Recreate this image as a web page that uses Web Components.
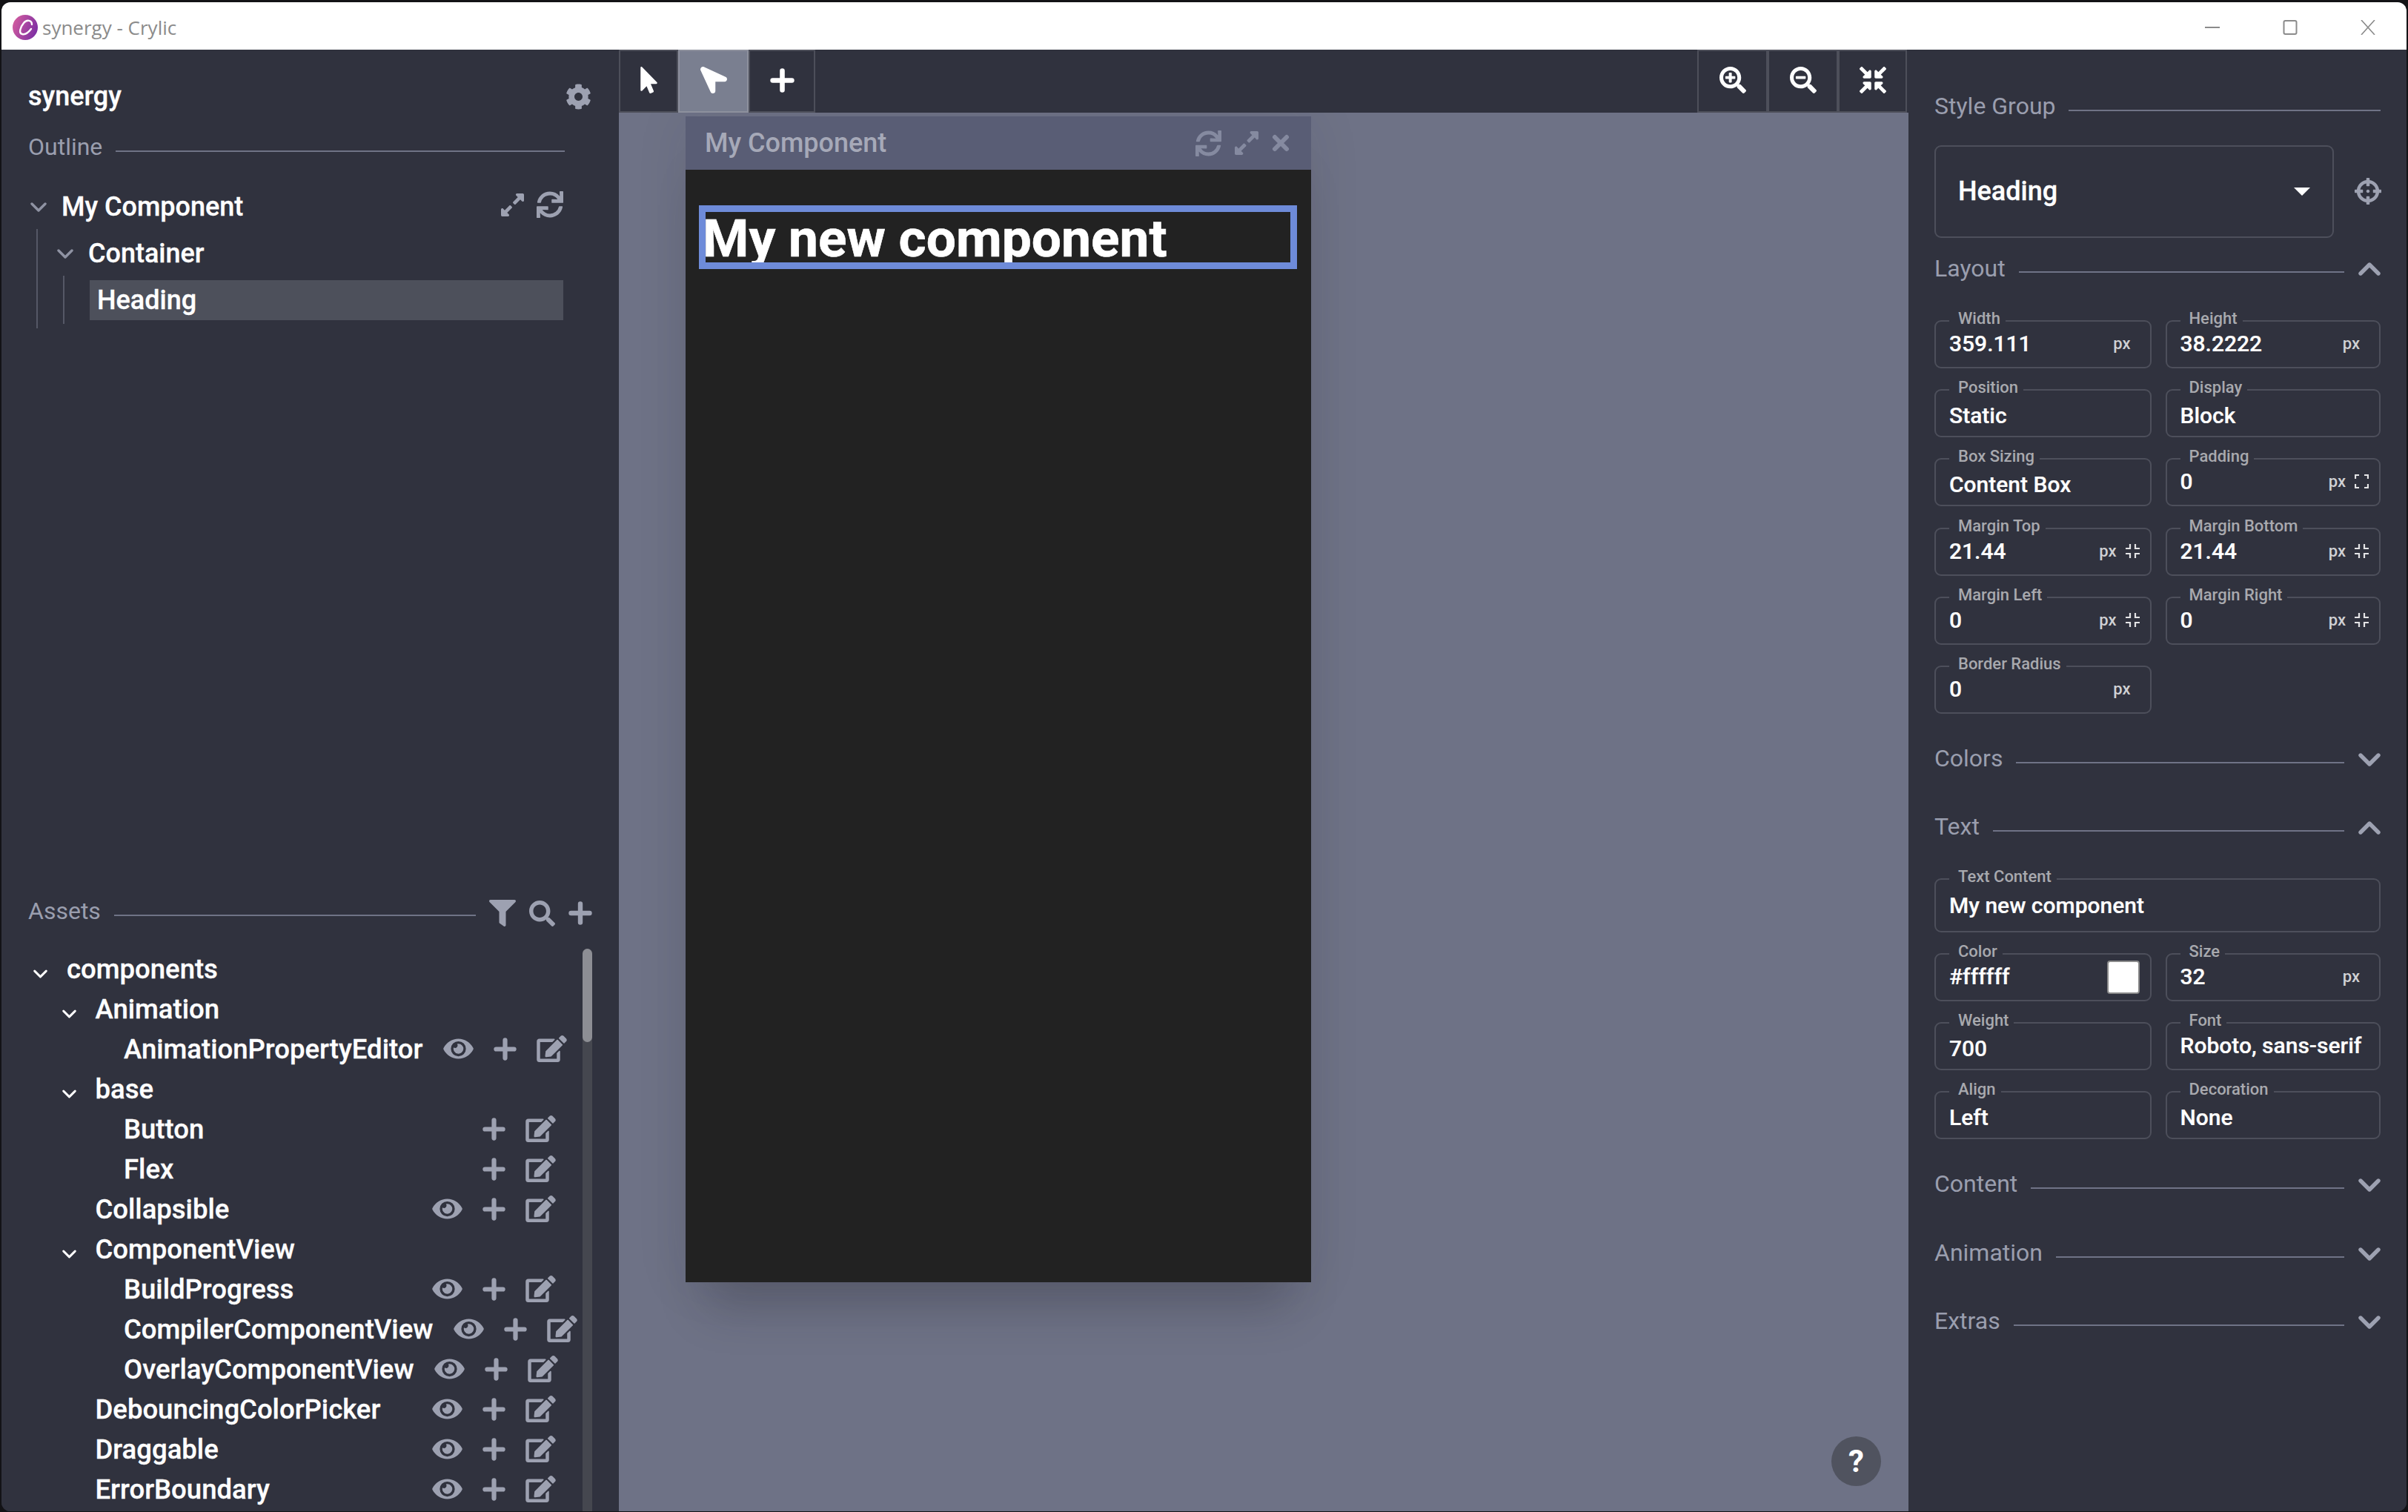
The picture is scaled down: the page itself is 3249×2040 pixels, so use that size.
<!DOCTYPE html>
<html>
<head>
<meta charset="utf-8">
<title>synergy - Crylic</title>
<style>
    html, body { margin: 0; height: 100%; background: #131316; overflow: hidden; }
    body { font-family: Roboto, "Liberation Sans", sans-serif; color: #fff; }
</style>
</head>
<body>
<app-shell>
    <title-bar slot="title"></title-bar>

    <side-panel slot="left">
        <project-head slot="head" name="synergy"></project-head>
        <section-head slot="head" label="Outline" style="margin-top:22px;padding-right:73px"></section-head>
        <outline-node slot="tree" label="My Component" root>
            <outline-node label="Container">
                <outline-node label="Heading" selected></outline-node>
            </outline-node>
        </outline-node>
        <asset-browser slot="assets"></asset-browser>
    </side-panel>

    <design-canvas slot="center"></design-canvas>

    <props-panel slot="right">
        <section-head label="Style Group" style="margin-top:57px"></section-head>
        <style-select value="Heading"></style-select>

        <section-head label="Layout" chevron="up" style="margin-top:22px"></section-head>
        <field-grid style="margin-top:51.5px">
            <prop-field label="Width" value="359.111" unit="px"></prop-field>
            <prop-field label="Height" value="38.2222" unit="px"></prop-field>
            <prop-field label="Position" value="Static" select></prop-field>
            <prop-field label="Display" value="Block" select></prop-field>
            <prop-field label="Box Sizing" value="Content Box" select></prop-field>
            <prop-field label="Padding" value="0" unit="px" corner="expand"></prop-field>
            <prop-field label="Margin Top" value="21.44" unit="px" corner="shrink"></prop-field>
            <prop-field label="Margin Bottom" value="21.44" unit="px" corner="shrink"></prop-field>
            <prop-field label="Margin Left" value="0" unit="px" corner="shrink"></prop-field>
            <prop-field label="Margin Right" value="0" unit="px" corner="shrink"></prop-field>
            <prop-field label="Border Radius" value="0" unit="px"></prop-field>
        </field-grid>

        <section-head label="Colors" chevron="down" style="margin-top:41px"></section-head>

        <section-head label="Text" chevron="up" style="margin-top:54px"></section-head>
        <field-grid style="margin-top:50.6px;--first-row:73px">
            <prop-field label="Text Content" value="My new component" wide style="grid-column:1 / -1"></prop-field>
            <prop-field label="Color" value="#ffffff" swatch></prop-field>
            <prop-field label="Size" value="32" unit="px"></prop-field>
            <prop-field label="Weight" value="700" select></prop-field>
            <prop-field label="Font" value="Roboto, sans-serif"></prop-field>
            <prop-field label="Align" value="Left" select></prop-field>
            <prop-field label="Decoration" value="None" select></prop-field>
        </field-grid>

        <section-head label="Content" chevron="down" style="margin-top:41px"></section-head>
        <section-head label="Animation" chevron="down" style="margin-top:55px"></section-head>
        <section-head label="Extras" chevron="down" style="margin-top:54px"></section-head>
    </props-panel>
</app-shell>

<script>
const searchTail = 'm201 284.7L476.7 505c-9.4 9.4-24.6 9.4-33.9 0L343 405.3c-4.5-4.5-7-10.6-7-17V372c-35.3 27.6-79.7 44-128 44C93.1 416 0 322.9 0 208S93.1 0 208 0s208 93.1 208 208c0 48.3-16.4 92.7-44 128h16.3c6.4 0 12.5 2.5 17 7l99.7 99.7c9.3 9.4 9.3 24.6 0 34zM344 208c0-75.2-60.8-136-136-136S72 132.8 72 208s60.8 136 136 136 136-60.8 136-136z';

const ICONS = {
    cog: ['0 0 512 512', '<path d="M487.4 315.7l-42.6-24.6c4.3-23.2 4.3-47 0-70.2l42.6-24.6c4.9-2.8 7.1-8.6 5.5-14-11.1-35.6-30-67.8-54.7-94.6-3.8-4.1-10-5.1-14.8-2.3L380.8 110c-17.9-15.4-38.5-27.3-60.8-35.1V25.8c0-5.6-3.9-10.5-9.4-11.7-36.7-8.2-74.3-7.8-109.2 0-5.5 1.2-9.4 6.1-9.4 11.7V75c-22.2 7.9-42.8 19.8-60.8 35.1L88.7 85.5c-4.9-2.8-11-1.9-14.8 2.3-24.7 26.7-43.6 58.9-54.7 94.6-1.7 5.4.6 11.2 5.5 14L67.3 221c-4.3 23.2-4.3 47 0 70.2l-42.6 24.6c-4.9 2.8-7.1 8.6-5.5 14 11.1 35.6 30 67.8 54.7 94.6 3.8 4.1 10 5.1 14.8 2.3l42.6-24.6c17.9 15.4 38.5 27.3 60.8 35.1v49.2c0 5.6 3.9 10.5 9.4 11.7 36.7 8.2 74.3 7.8 109.2 0 5.5-1.2 9.4-6.1 9.4-11.7v-49.2c22.2-7.9 42.8-19.8 60.8-35.1l42.6 24.6c4.9 2.8 11 1.9 14.8-2.3 24.7-26.7 43.6-58.9 54.7-94.6 1.5-5.5-.7-11.3-5.6-14.1zM256 336c-44.1 0-80-35.9-80-80s35.9-80 80-80 80 35.9 80 80-35.9 80-80 80z"/>'],
    sync: ['0 0 512 512', '<path d="M440.65 12.57l4 82.77A247.16 247.16 0 0 0 255.83 8C134.73 8 33.91 94.92 12.29 209.82A12 12 0 0 0 24.09 224h49.05a12 12 0 0 0 11.67-9.26 175.91 175.91 0 0 1 317-56.94l-101.46-4.86a12 12 0 0 0-12.57 12v47.41a12 12 0 0 0 12 12H500a12 12 0 0 0 12-12V12a12 12 0 0 0-12-12h-47.37a12 12 0 0 0-11.98 12.57zM255.83 432a175.61 175.61 0 0 1-146-77.8l101.8 4.87a12 12 0 0 0 12.57-12v-47.4a12 12 0 0 0-12-12H12a12 12 0 0 0-12 12V500a12 12 0 0 0 12 12h47.35a12 12 0 0 0 12-12.6l-4.15-82.57A247.17 247.17 0 0 0 255.83 504c121.11 0 221.93-86.92 243.55-201.82a12 12 0 0 0-11.8-14.18h-49.05a12 12 0 0 0-11.67 9.26A175.86 175.86 0 0 1 255.83 432z"/>'],
    expand: ['0 32 448 448', '<path d="M212.686 315.314L120 408l32.922 31.029c15.12 15.12 4.412 40.971-16.97 40.971h-112C10.697 480 0 469.255 0 456V344c0-21.382 25.803-32.09 40.922-16.971L72 360l92.686-92.686c6.248-6.248 16.379-6.248 22.627 0l25.373 25.373c6.249 6.248 6.249 16.378 0 22.627zm22.628-118.628L328 104l-32.922-31.029C279.958 57.851 290.666 32 312.048 32h112C437.303 32 448 42.745 448 56v112c0 21.382-25.803 32.09-40.922 16.971L376 152l-92.686 92.686c-6.248 6.248-16.379 6.248-22.627 0l-25.373-25.373c-6.249-6.248-6.249-16.378 0-22.627z"/>'],
    plus: ['0 0 32 32', '<path d="M16 3.5v25M3.5 16h25" fill="none" stroke="currentColor" stroke-width="6.4" stroke-linecap="round"/>'],
    eye: ['0 0 576 512', '<path d="M572.52 241.4C518.29 135.59 410.93 64 288 64S57.68 135.64 3.48 241.41a32.4 32.4 0 0 0 0 29.2C57.71 376.41 165.07 448 288 448s230.32-71.64 284.52-177.41a32.4 32.4 0 0 0 0-29.19zM288 400a144 144 0 1 1 144-144 143.93 143.93 0 0 1-144 144zm0-240a95.31 95.31 0 0 0-25.31 3.79 47.85 47.85 0 0 1-66.9 66.9A95.78 95.78 0 1 0 288 160z"/>'],
    edit: ['0 0 576 512', '<path d="M402.6 83.2l90.2 90.2c3.8 3.8 3.8 10 0 13.8L274.4 405.6l-92.8 10.3c-12.4 1.4-22.9-9.1-21.5-21.5l10.3-92.8L388.8 83.2c3.8-3.8 10-3.8 13.8 0zm162-22.9l-48.8-48.8c-15.2-15.2-39.9-15.2-55.2 0l-35.4 35.4c-3.8 3.8-3.8 10 0 13.8l90.2 90.2c3.8 3.8 10 3.8 13.8 0l35.4-35.4c15.2-15.3 15.2-40 0-55.2zM384 346.2V448H64V128h229.8c3.2 0 6.2-1.3 8.5-3.5l40-40c7.6-7.6 2.2-20.5-8.5-20.5H48C21.5 64 0 85.5 0 112v352c0 26.5 21.5 48 48 48h352c26.5 0 48-21.5 48-48V306.2c0-10.7-12.9-16-20.5-8.5l-40 40c-2.2 2.3-3.5 5.3-3.5 8.5z"/>'],
    filter: ['0 0 512 512', '<path d="M487.976 0H24.028C2.71 0-8.047 25.866 7.058 40.971L192 225.941V432c0 7.831 3.821 15.17 10.237 19.662l80 55.98C298.02 518.69 320 507.493 320 487.98V225.941l184.947-184.97C520.021 25.896 509.338 0 487.976 0z"/>'],
    search: ['0 0 512 512', '<path d="M505 442.7L405.3 343c-4.5-4.5-10.6-7-17-7H372c27.6-35.3 44-79.7 44-128C416 93.1 322.9 0 208 0S0 93.1 0 208s93.1 208 208 208c48.3 0 92.7-16.4 128-44v16.3c0 6.4 2.5 12.5 7 17l99.7 99.7c9.4 9.4 24.6 9.4 33.9 0l28.3-28.3c9.4-9.4 9.4-24.6.1-34zM208 336c-70.7 0-128-57.2-128-128 0-70.7 57.2-128 128-128 70.7 0 128 57.2 128 128 0 70.7-57.2 128-128 128z"/>'],
    pointer: ['0 0 320 512', '<path d="M302.189 329.126H196.105l55.831 135.993c3.889 9.428-.555 19.999-9.444 23.999l-49.165 21.427c-9.165 4-19.443-.571-23.332-9.714l-53.053-129.136-86.664 89.138C18.729 472.71 0 463.554 0 447.977V18.299C0 1.899 19.921-6.096 30.277 5.443l284.412 292.542c11.472 11.179 3.007 31.141-12.5 31.141z"/>'],
    arrow: ['0 0 512 512', '<path transform="matrix(-1 0 0 1 512 0)" d="M444.52 3.52L28.74 195.42c-47.97 22.39-31.98 92.75 19.19 92.75h175.91v175.91c0 51.17 70.36 67.17 92.75 19.19l191.9-415.78c15.99-38.39-25.59-79.97-63.97-63.97z"/>'],
    zoomin: ['0 0 512 512', '<path d="M304 192v32c0 6.6-5.4 12-12 12h-56v56c0 6.6-5.4 12-12 12h-32c-6.6 0-12-5.4-12-12v-56h-56c-6.6 0-12-5.4-12-12v-32c0-6.6 5.4-12 12-12h56v-56c0-6.6 5.4-12 12-12h32c6.6 0 12 5.4 12 12v56h56c6.6 0 12 5.4 12 12z' + searchTail + '"/>'],
    zoomout: ['0 0 512 512', '<path d="M304 192v32c0 6.6-5.4 12-12 12H124c-6.6 0-12-5.4-12-12v-32c0-6.6 5.4-12 12-12h168c6.6 0 12 5.4 12 12z' + searchTail + '"/>'],
    compress: ['0 0 512 512', '<path d="M200 288H88c-21.4 0-32.1 25.8-17 41l32.9 31-99.2 99.3c-6.2 6.2-6.2 16.4 0 22.6l25.4 25.4c6.2 6.2 16.4 6.2 22.6 0L152 408l31.1 33c15.1 15.1 40.9 4.4 40.9-17V312c0-13.3-10.7-24-24-24zm112-64h112c21.4 0 32.1-25.9 17-41l-33-31 99.3-99.3c6.2-6.2 6.2-16.4 0-22.6L481.9 4.7c-6.2-6.2-16.4-6.2-22.6 0L360 104l-31.1-33C313.8 55.9 288 66.6 288 88v112c0 13.3 10.7 24 24 24zm96 136l33-31.1c15.1-15.1 4.4-40.9-17-40.9H312c-13.3 0-24 10.7-24 24v112c0 21.4 25.9 32.1 41 17l31-32.9 99.3 99.3c6.2 6.2 16.4 6.2 22.6 0l25.4-25.4c6.2-6.2 6.2-16.4 0-22.6L408 360zM183 71.1L152 104 52.7 4.7c-6.2-6.2-16.4-6.2-22.6 0L4.7 30.1c-6.2 6.2-6.2 16.4 0 22.6L104 152l-33 31.1C55.9 198.2 66.6 224 88 224h112c13.3 0 24-10.7 24-24V88c0-21.3-25.9-32-41-16.9z"/>'],
    crosshairs: ['0 0 512 512', '<path d="M500 224h-30.364C455.724 130.325 381.675 56.276 288 42.364V12c0-6.627-5.373-12-12-12h-40c-6.627 0-12 5.373-12 12v30.364C130.325 56.276 56.276 130.325 42.364 224H12c-6.627 0-12 5.373-12 12v40c0 6.627 5.373 12 12 12h30.364C56.276 381.675 130.325 455.724 224 469.636V500c0 6.627 5.373 12 12 12h40c6.627 0 12-5.373 12-12v-30.364C381.675 455.724 455.724 381.675 469.636 288H500c6.627 0 12-5.373 12-12v-40c0-6.627-5.373-12-12-12zM288 404.634V364c0-6.627-5.373-12-12-12h-40c-6.627 0-12 5.373-12 12v40.634C165.826 392.232 119.783 346.243 107.366 288H148c6.627 0 12-5.373 12-12v-40c0-6.627-5.373-12-12-12h-40.634C119.768 165.826 165.757 119.783 224 107.366V148c0 6.627 5.373 12 12 12h40c6.627 0 12-5.373 12-12v-40.634C346.174 119.768 392.217 165.757 404.634 224H364c-6.627 0-12 5.373-12 12v40c0 6.627 5.373 12 12 12h40.634C392.232 346.174 346.243 392.217 288 404.634zM288 256c0 17.673-14.327 32-32 32s-32-14.327-32-32c0-17.673 14.327-32 32-32s32 14.327 32 32z"/>'],
    close: ['0 0 24 24', '<path d="M4 4l16 16M20 4L4 20" fill="none" stroke="currentColor" stroke-width="6" stroke-linecap="round"/>'],
    down: ['0 0 30 18', '<path d="M3 3l12 12L27 3" fill="none" stroke="currentColor" stroke-width="5.4" stroke-linecap="round" stroke-linejoin="round"/>'],
    up: ['0 0 30 18', '<path d="M3 15L15 3l12 12" fill="none" stroke="currentColor" stroke-width="5.4" stroke-linecap="round" stroke-linejoin="round"/>'],
    caret: ['0 0 22 13', '<path d="M2 2l9 9 9-9" fill="none" stroke="currentColor" stroke-width="3.4" stroke-linecap="round" stroke-linejoin="round"/>'],
    shrink: ['0 0 19 19', '<path d="M6 0v6H0M13 0v6h6M0 13h6v6M19 13h-6v6" fill="none" stroke="currentColor" stroke-width="2.2"/>'],
    grow: ['0 0 19 19', '<path d="M1 6V1h5M13 1h5v5M1 13v5h5M18 13v5h-5" fill="none" stroke="currentColor" stroke-width="2.2"/>'],
};

class UiIcon extends HTMLElement {
    constructor() {
        super();
        this.attachShadow({ mode: 'open' });
    }

    connectedCallback() {
        const [box, body] = ICONS[this.getAttribute('name')];
        const w = this.getAttribute('w') || 32;
        const h = this.getAttribute('h') || w;
        this.shadowRoot.innerHTML = `
            <style>
                :host { display: inline-flex; flex: none; }
                svg { display: block; fill: currentColor; }
            </style>
            <svg width="${w}" height="${h}" viewBox="${box}">${body}</svg>
        `;
    }
}
customElements.define('ui-icon', UiIcon);

class AppShell extends HTMLElement {
    constructor() {
        super();
        this.attachShadow({ mode: 'open' });
    }

    connectedCallback() {
        this.shadowRoot.innerHTML = `
            <style>
                :host {
                    display: flex;
                    flex-direction: column;
                    box-sizing: border-box;
                    width: 3249px;
                    height: 2040px;
                    padding: 3px 2px 1px 2px;
                }
                .frame {
                    flex: 1;
                    display: flex;
                    flex-direction: column;
                    min-height: 0;
                    border-radius: 12px;
                    overflow: hidden;
                    background: #30323e;
                }
                .main {
                    flex: 1;
                    min-height: 0;
                    display: grid;
                    grid-template-columns: 833px 1740px 672px;
                }
            </style>
            <div class="frame">
                <slot name="title"></slot>
                <div class="main">
                    <slot name="left"></slot>
                    <slot name="center"></slot>
                    <slot name="right"></slot>
                </div>
            </div>
        `;
    }
}
customElements.define('app-shell', AppShell);

class TitleBar extends HTMLElement {
    constructor() {
        super();
        this.attachShadow({ mode: 'open' });
    }

    connectedCallback() {
        this.shadowRoot.innerHTML = `
            <style>
                :host {
                    display: flex;
                    align-items: center;
                    height: 64px;
                    background: #fff;
                    color: #8b8b8b;
                    padding-left: 15px;
                    font: 400 26px "Open Sans", sans-serif;
                }
                .logo { flex: none; display: block; margin-right: 6px; margin-top: 3px; }
                .title { flex: 1; margin-top: 3px; }
                .controls {
                    display: flex;
                    align-items: center;
                    gap: 85px;
                    padding-right: 42px;
                    margin-top: 3px;
                }
                .controls svg { display: block; fill: none; stroke: #8b8b8b; }
            </style>
            <svg class="logo" width="34" height="34" viewBox="0 0 34 34">
                <defs>
                    <linearGradient id="g" x1="0" y1="0.3" x2="1" y2="0.7">
                        <stop offset="0" stop-color="#d25c9f"/>
                        <stop offset="1" stop-color="#7a2da3"/>
                    </linearGradient>
                </defs>
                <circle cx="17" cy="17" r="17" fill="url(#g)"/>
                <path d="M26 13C26 7 19 6 15 11C10 17 8 25 13 26C17 27 22 23 25 19" fill="none" stroke="#fff" stroke-width="2.4" stroke-linecap="round"/>
            </svg>
            <div class="title">synergy - Crylic</div>
            <div class="controls">
                <svg width="20" height="20" viewBox="0 0 20 20"><path d="M0 10h20" stroke-width="2"/></svg>
                <svg width="20" height="20" viewBox="0 0 20 20"><rect x="1.5" y="1" width="17" height="18" rx="2" stroke-width="2"/></svg>
                <svg width="20" height="20" viewBox="0 0 20 20"><path d="M1 0l18 20M19 0L1 20" stroke-width="1.6"/></svg>
            </div>
        `;
    }
}
customElements.define('title-bar', TitleBar);

class SidePanel extends HTMLElement {
    constructor() {
        super();
        this.attachShadow({ mode: 'open' });
    }

    connectedCallback() {
        this.shadowRoot.innerHTML = `
            <style>
                :host {
                    display: flex;
                    flex-direction: column;
                    min-height: 0;
                    overflow: hidden;
                    background: #30323e;
                }
                .head { padding: 36px 0 0 36px; display: block; }
                .tree { display: block; padding: 35px 75px 0 36px; }
                .assets { display: block; margin-top: auto; }
            </style>
            <div class="head"><slot name="head"></slot></div>
            <div class="tree"><slot name="tree"></slot></div>
            <div class="assets"><slot name="assets"></slot></div>
        `;
    }
}
customElements.define('side-panel', SidePanel);

class ProjectHead extends HTMLElement {
    constructor() {
        super();
        this.attachShadow({ mode: 'open' });
    }

    connectedCallback() {
        this.shadowRoot.innerHTML = `
            <style>
                :host {
                    display: flex;
                    align-items: center;
                    justify-content: space-between;
                    height: 54px;
                    padding-right: 37px;
                    font: 500 36px Roboto, sans-serif;
                    -webkit-text-stroke: 0.3px #fff;
                    color: #fff;
                }
                ui-icon { color: #9da1b1; }
            </style>
            <span>${this.getAttribute('name')}</span>
            <ui-icon name="cog" w="35"></ui-icon>
        `;
    }
}
customElements.define('project-head', ProjectHead);

class SectionHead extends HTMLElement {
    constructor() {
        super();
        this.attachShadow({ mode: 'open' });
    }

    connectedCallback() {
        const chevron = this.getAttribute('chevron');
        this.shadowRoot.innerHTML = `
            <style>
                :host {
                    display: flex;
                    align-items: center;
                    gap: 18px;
                    height: 38px;
                    font: 400 32px Roboto, sans-serif;
                    color: #9a9eae;
                }
                .rule { flex: 1; height: 2px; background: #6f7386; margin-top: 11px; }
                ui-icon { color: #9da1b1; margin-left: 1px; margin-top: 3px; }
            </style>
            <span>${this.getAttribute('label')}</span>
            <div class="rule"></div>
            <slot></slot>
            ${chevron ? `<ui-icon name="${chevron}" w="30" h="18"></ui-icon>` : ''}
        `;
    }
}
customElements.define('section-head', SectionHead);

class OutlineNode extends HTMLElement {
    constructor() {
        super();
        this.attachShadow({ mode: 'open' });
    }

    connectedCallback() {
        const selected = this.hasAttribute('selected');
        const root = this.hasAttribute('root');
        const leaf = this.children.length === 0;
        this.shadowRoot.innerHTML = `
            <style>
                :host {
                    display: block;
                    font: 500 36px Roboto, sans-serif;
                    -webkit-text-stroke: 0.3px #fff;
                    color: #fff;
                }
                .row { display: flex; align-items: center; height: 54px; }
                .row.selected { background: #4d505b; padding-left: 10px; }
                .chev { color: #8f93a3; margin: 0 20px 0 3px; }
                .label { flex: 1; }
                .tools { display: flex; align-items: center; gap: 17px; color: #9da1b1; margin-top: -6px; }
                .kids {
                    border-left: 2px solid #555866;
                    margin: 3px 0 0 11px;
                    padding: 6px 0 ${root ? 6 : 5}px ${root ? 23 : 34}px;
                }
            </style>
            <div class="row ${selected ? 'selected' : ''}">
                ${leaf ? '' : '<ui-icon class="chev" name="caret" w="22" h="13"></ui-icon>'}
                <span class="label">${this.getAttribute('label')}</span>
                ${root ? '<div class="tools"><ui-icon name="expand" w="31"></ui-icon><ui-icon name="sync" w="36"></ui-icon></div>' : ''}
            </div>
            ${leaf ? '' : '<div class="kids"><slot></slot></div>'}
        `;
    }
}
customElements.define('outline-node', OutlineNode);

class AssetRow extends HTMLElement {
    constructor() {
        super();
        this.attachShadow({ mode: 'open' });
    }

    connectedCallback() {
        const level = Number(this.getAttribute('level'));
        const folder = this.hasAttribute('folder');
        const actions = this.getAttribute('actions') || '';
        this.shadowRoot.innerHTML = `
            <style>
                :host {
                    display: flex;
                    align-items: center;
                    width: max-content;
                    min-width: 100%;
                    box-sizing: border-box;
                    height: 54px;
                    padding-left: ${level * 38.5}px;
                    font: 500 36.5px Roboto, sans-serif;
                    -webkit-text-stroke: 0.3px #fff;
                    color: #fff;
                }
                .slot { width: 50px; flex: none; }
                .slot ui-icon { margin-left: 5px; }
                .actions {
                    margin-left: auto;
                    padding-left: 28px;
                    display: flex;
                    align-items: center;
                    gap: 27px;
                    color: #9da1b1;
                }
            </style>
            <div class="slot">${folder ? '<ui-icon name="caret" w="19" h="12"></ui-icon>' : ''}</div>
            <span>${this.getAttribute('name')}</span>
            <div class="actions">
                ${actions.includes('eye') ? '<ui-icon name="eye" w="41" h="36"></ui-icon>' : ''}
                ${actions.includes('plus') ? '<ui-icon name="plus" w="31"></ui-icon>' : ''}
                ${actions.includes('edit') ? '<ui-icon name="edit" w="41" h="36"></ui-icon>' : ''}
            </div>
        `;
    }
}
customElements.define('asset-row', AssetRow);

const assetRows = [
    { name: 'components', level: 0, folder: true },
    { name: 'Animation', level: 1, folder: true },
    { name: 'AnimationPropertyEditor', level: 2, actions: 'eye plus edit' },
    { name: 'base', level: 1, folder: true },
    { name: 'Button', level: 2, actions: 'plus edit' },
    { name: 'Flex', level: 2, actions: 'plus edit' },
    { name: 'Collapsible', level: 1, actions: 'eye plus edit' },
    { name: 'ComponentView', level: 1, folder: true },
    { name: 'BuildProgress', level: 2, actions: 'eye plus edit' },
    { name: 'CompilerComponentView', level: 2, actions: 'eye plus edit' },
    { name: 'OverlayComponentView', level: 2, actions: 'eye plus edit' },
    { name: 'DebouncingColorPicker', level: 1, actions: 'eye plus edit' },
    { name: 'Draggable', level: 1, actions: 'eye plus edit' },
    { name: 'ErrorBoundary', level: 1, actions: 'eye plus edit' },
];

class AssetBrowser extends HTMLElement {
    constructor() {
        super();
        this.attachShadow({ mode: 'open' });
    }

    connectedCallback() {
        this.shadowRoot.innerHTML = `
            <style>
                :host { display: flex; flex-direction: column; height: 829px; }
                .top { padding: 0 36px 0 36px; }
                .tools { display: flex; align-items: center; gap: 18px; color: #9da1b1; margin-top: 6px; }
                .body {
                    flex: 1;
                    min-height: 0;
                    display: flex;
                    margin-top: 32px;
                    padding: 0 36px 0 38px;
                }
                .list { flex: 1; min-width: 0; overflow: hidden; padding-right: 36px; }
                .track { flex: none; width: 13px; border-radius: 7px 7px 0 0; background: #45474f; }
                .thumb { height: 126px; border-radius: 7px; background: #8d8e94; }
            </style>
            <div class="top">
                <section-head label="Assets">
                    <div class="tools">
                        <ui-icon name="filter" w="36"></ui-icon>
                        <ui-icon name="search" w="35"></ui-icon>
                        <ui-icon name="plus" w="32"></ui-icon>
                    </div>
                </section-head>
            </div>
            <div class="body">
                <div class="list"></div>
                <div class="track"><div class="thumb"></div></div>
            </div>
        `;
        const list = this.shadowRoot.querySelector('.list');
        assetRows.forEach(item => {
            const row = document.createElement('asset-row');
            row.setAttribute('name', item.name);
            row.setAttribute('level', item.level);
            if (item.folder) row.setAttribute('folder', '');
            if (item.actions) row.setAttribute('actions', item.actions);
            list.appendChild(row);
        });
    }
}
customElements.define('asset-browser', AssetBrowser);

class ToolButton extends HTMLElement {
    constructor() {
        super();
        this.attachShadow({ mode: 'open' });
    }

    connectedCallback() {
        this.shadowRoot.innerHTML = `
            <style>
                :host {
                    display: flex;
                    align-items: center;
                    justify-content: center;
                    box-sizing: border-box;
                    height: 85px;
                    padding-bottom: 3px;
                    border: 2px solid #4d4f5a;
                    color: #fff;
                }
                :host([active]) { background: #7a7f90; border-color: #8d909d; }
            </style>
            <slot></slot>
        `;
    }
}
customElements.define('tool-button', ToolButton);

class DesignCanvas extends HTMLElement {
    constructor() {
        super();
        this.attachShadow({ mode: 'open' });
    }

    connectedCallback() {
        this.shadowRoot.innerHTML = `
            <style>
                :host {
                    display: flex;
                    flex-direction: column;
                    min-height: 0;
                    background: #6e7286;
                }
                .bar {
                    flex: none;
                    display: flex;
                    justify-content: space-between;
                    height: 85px;
                    background: #30323e;
                }
                .group { display: flex; }
                .group.end { margin-right: 2px; }
                .stage { flex: 1; position: relative; overflow: hidden; }
                preview-window { position: absolute; left: 90px; top: 5px; }
                .help {
                    position: absolute;
                    right: 37px;
                    bottom: 34px;
                    width: 67px;
                    height: 67px;
                    border-radius: 50%;
                    background: #50535f;
                    color: #fff;
                    font: 700 42px Roboto, sans-serif;
                    display: flex;
                    align-items: center;
                    justify-content: center;
                }
            </style>
            <div class="bar">
                <div class="group">
                    <tool-button style="width:80px"><ui-icon name="pointer" w="23" h="36"></ui-icon></tool-button>
                    <tool-button active style="width:95px"><ui-icon name="arrow" w="36"></ui-icon></tool-button>
                    <tool-button style="width:90px"><ui-icon name="plus" w="33"></ui-icon></tool-button>
                </div>
                <div class="group end">
                    <tool-button style="width:95px"><ui-icon name="zoomin" w="36"></ui-icon></tool-button>
                    <tool-button style="width:95px"><ui-icon name="zoomout" w="36"></ui-icon></tool-button>
                    <tool-button style="width:93px"><ui-icon name="compress" w="36"></ui-icon></tool-button>
                </div>
            </div>
            <div class="stage">
                <preview-window></preview-window>
                <div class="help">?</div>
            </div>
        `;
    }
}
customElements.define('design-canvas', DesignCanvas);

class PreviewWindow extends HTMLElement {
    constructor() {
        super();
        this.attachShadow({ mode: 'open' });
    }

    connectedCallback() {
        this.shadowRoot.innerHTML = `
            <style>
                :host {
                    display: flex;
                    flex-direction: column;
                    width: 844px;
                    height: 1573px;
                    background: #222222;
                    box-shadow: 0 60px 60px -30px rgba(30,30,40,0.26), 0 0 70px rgba(40,40,50,0.08);
                }
                .head {
                    flex: none;
                    display: flex;
                    align-items: center;
                    height: 72px;
                    padding: 0 29px 0 26px;
                    background: #595d75;
                    color: #a6a9b8;
                    font: 500 36px Roboto, sans-serif;
                }
                .name { flex: 1; }
                .tools { display: flex; align-items: center; color: #858aa0; gap: 18px; }
                .body { flex: 1; padding: 48px 18px 0 18px; }
                h1 {
                    position: relative;
                    box-sizing: border-box;
                    margin: 0;
                    height: 86px;
                    width: 807px;
                    padding-left: 5px;
                    font: 700 71.3px/90px Roboto, sans-serif;
                    -webkit-text-stroke: 0.6px #fff;
                    color: #fff;
                    white-space: nowrap;
                }
                h1::after {
                    content: "";
                    position: absolute;
                    inset: 0;
                    border: 9px solid #6e8bd9;
                }
            </style>
            <div class="head">
                <span class="name">My Component</span>
                <div class="tools">
                    <ui-icon name="sync" w="35"></ui-icon>
                    <ui-icon name="expand" w="32"></ui-icon>
                    <ui-icon name="close" w="24"></ui-icon>
                </div>
            </div>
            <div class="body"><h1>My new component</h1></div>
        `;
    }
}
customElements.define('preview-window', PreviewWindow);

class PropsPanel extends HTMLElement {
    constructor() {
        super();
        this.attachShadow({ mode: 'open' });
    }

    connectedCallback() {
        this.shadowRoot.innerHTML = `
            <style>
                :host {
                    display: block;
                    box-sizing: border-box;
                    padding: 0 35px;
                    background: #30323e;
                    min-height: 0;
                    overflow: hidden;
                }
            </style>
            <slot></slot>
        `;
    }
}
customElements.define('props-panel', PropsPanel);

class StyleSelect extends HTMLElement {
    constructor() {
        super();
        this.attachShadow({ mode: 'open' });
    }

    connectedCallback() {
        this.shadowRoot.innerHTML = `
            <style>
                :host { display: flex; align-items: center; gap: 28px; margin: 33.6px -1px 0 0; }
                .box {
                    flex: 1;
                    display: flex;
                    align-items: center;
                    justify-content: space-between;
                    box-sizing: border-box;
                    height: 125px;
                    padding: 0 30px;
                    border: 2px solid #4d4f5b;
                    border-radius: 9px;
                    font: 500 36px Roboto, sans-serif;
                    -webkit-text-stroke: 0.3px #fff;
                    color: #fff;
                }
                .tri {
                    width: 0;
                    height: 0;
                    border-left: 11.5px solid transparent;
                    border-right: 11.5px solid transparent;
                    border-top: 11px solid #fff;
                }
                ui-icon { color: #9da1b1; }
            </style>
            <div class="box"><span>${this.getAttribute('value')}</span><span class="tri"></span></div>
            <ui-icon name="crosshairs" w="36"></ui-icon>
        `;
    }
}
customElements.define('style-select', StyleSelect);

class FieldGrid extends HTMLElement {
    constructor() {
        super();
        this.attachShadow({ mode: 'open' });
    }

    connectedCallback() {
        this.shadowRoot.innerHTML = `
            <style>
                :host {
                    display: grid;
                    grid-template-columns: 292.5px 290.5px;
                    grid-template-rows: var(--first-row, 65px);
                    grid-auto-rows: 65px;
                    gap: 28.2px 19px;
                }
            </style>
            <slot></slot>
        `;
    }
}
customElements.define('field-grid', FieldGrid);

class PropField extends HTMLElement {
    constructor() {
        super();
        this.attachShadow({ mode: 'open' });
    }

    connectedCallback() {
        const unit = this.getAttribute('unit');
        const corner = this.getAttribute('corner');
        const select = this.hasAttribute('select');
        const wide = this.hasAttribute('wide');
        const swatch = this.hasAttribute('swatch');
        const pad = select ? '6px 28px 0 18px' : wide ? '0 28px 0 18px' : `0 ${corner || swatch ? 14 : 26}px 2px 18px`;
        this.shadowRoot.innerHTML = `
            <style>
                :host {
                    position: relative;
                    display: flex;
                    align-items: center;
                    box-sizing: border-box;
                    border: 2px solid #4d4f5b;
                    border-radius: 9px;
                    padding: ${pad};
                    font: 500 30px Roboto, sans-serif;
                    color: #fff;
                }
                .label {
                    position: absolute;
                    left: 18px;
                    top: -17px;
                    padding: 0 7px 0 12px;
                    background: #30323e;
                    font: 500 22px/26px Roboto, sans-serif;
                    color: #a8a9ae;
                    white-space: nowrap;
                }
                .value { flex: 1; white-space: nowrap; -webkit-text-stroke: 0.2px #fff; }
                .unit { font: 500 22px Roboto, sans-serif; color: #d0d1d4; }
                .corner { margin-left: 12px; color: #e4e4e6; }
                .swatch {
                    box-sizing: border-box;
                    width: 44px;
                    height: 45px;
                    margin-top: 2px;
                    border: 2px solid #8a8a8a;
                    border-radius: 4px;
                    background: #fff;
                }
            </style>
            <span class="label">${this.getAttribute('label')}</span>
            <span class="value">${this.getAttribute('value')}</span>
            ${unit ? `<span class="unit">${unit}</span>` : ''}
            ${corner ? `<ui-icon class="corner" name="${corner === 'expand' ? 'grow' : 'shrink'}" w="19"></ui-icon>` : ''}
            ${swatch ? '<span class="swatch"></span>' : ''}
        `;
    }
}
customElements.define('prop-field', PropField);
</script>
</body>
</html>
